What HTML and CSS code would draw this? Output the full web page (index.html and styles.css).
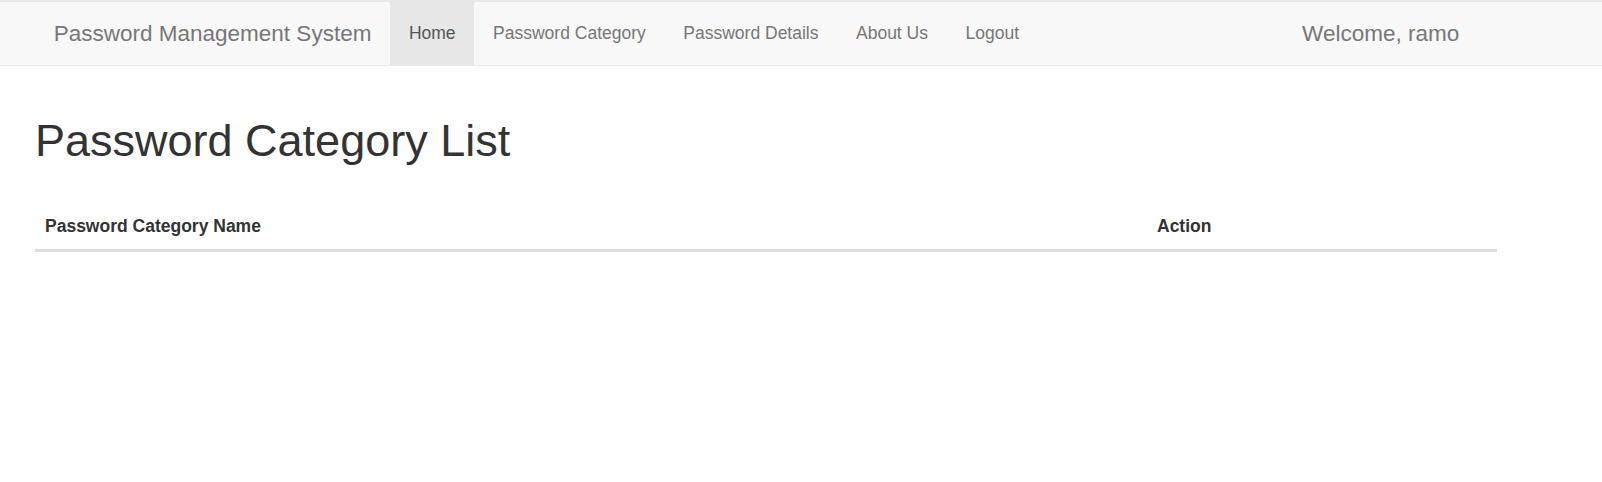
FILE: index.html
```html
<!DOCTYPE html>
<html lang="en">
<head>
<meta charset="utf-8">
<title>Password Category List</title>
<link rel="stylesheet" href="styles.css">
</head>
<body>
<nav class="navbar">
  <div class="navbar-inner">
    <a class="brand" href="#">Password Management System</a>
    <ul class="nav">
      <li class="active"><a href="#">Home</a></li>
      <li><a href="#">Password Category</a></li>
      <li><a href="#">Password Details</a></li>
      <li><a href="#">About Us</a></li>
      <li><a href="#">Logout</a></li>
    </ul>
    <span class="welcome">Welcome, ramo</span>
  </div>
</nav>
<main class="page">
  <h1 class="title">Password Category List</h1>
  <table class="table">
    <thead>
      <tr>
        <th class="col-name">Password Category Name</th>
        <th>Action</th>
      </tr>
    </thead>
    <tbody></tbody>
  </table>
</main>
</body>
</html>
```

FILE: styles.css
```css
* { box-sizing: border-box; }

html, body {
  margin: 0;
  padding: 0;
  background: #fff;
}

body {
  font-family: "Liberation Sans", Arial, Helvetica, sans-serif;
  font-size: 17.5px;
  line-height: 25px;
  color: #333;
}

a { text-decoration: none; }

.navbar {
  background: #f8f8f8;
  border-top: 2px solid #e7e7e7;
  border-bottom: 1px solid #e7e7e7;
}

.navbar-inner {
  display: flex;
  align-items: stretch;
  height: 63px;
  padding: 0 124px 0 35px;
}

.brand {
  display: block;
  padding: 19px 18.75px;
  font-size: 22.5px;
  line-height: 25px;
  color: #777;
}

.nav {
  display: flex;
  list-style: none;
  margin: 0;
  padding: 0;
}

.nav li a {
  display: block;
  height: 63px;
  padding: 19px 18.75px;
  line-height: 25px;
  color: #777;
}

.nav li.active a {
  background: #e7e7e7;
  color: #555;
}

.welcome {
  margin-left: auto;
  padding: 19px 18.75px;
  font-size: 22.5px;
  line-height: 25px;
  color: #777;
}

.page {
  padding: 25px 35px 0;
}

.title {
  margin: 25px 0 0 0;
  font-size: 45px;
  line-height: 49.5px;
  font-weight: 500;
  color: #333;
}

.table {
  width: 1462px;
  margin-top: 38px;
  border-collapse: collapse;
  border-spacing: 0;
}

.table th {
  text-align: left;
  font-weight: bold;
  padding: 10px;
  line-height: 25px;
  border-bottom: 3px solid #ddd;
}

.col-name {
  width: 1112px;
}
```
